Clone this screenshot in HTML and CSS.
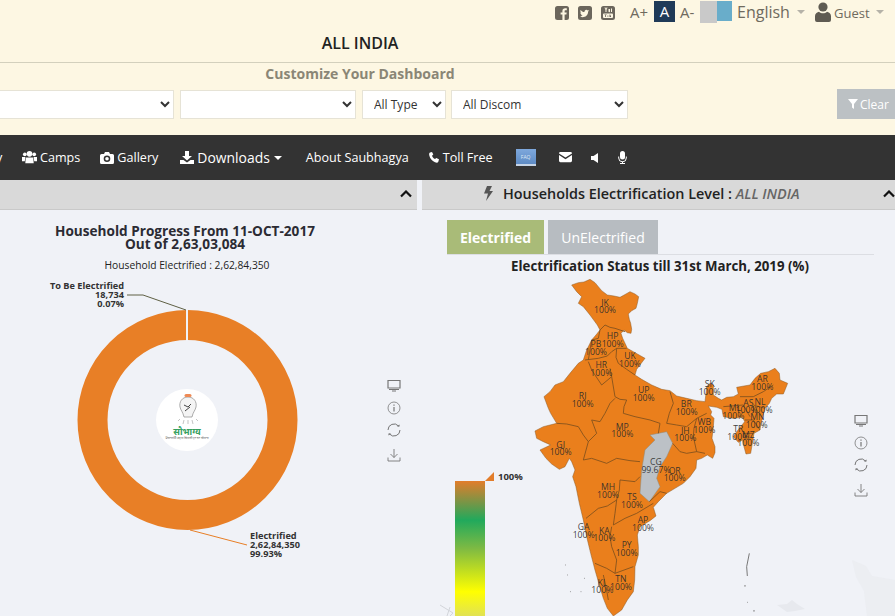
FILE: index.html
```html
<!DOCTYPE html>
<html lang="en">
<head>
<meta charset="utf-8">
<title>Saubhagya Dashboard</title>
<link rel="stylesheet" href="styles.css">
</head>
<body>
<header class="top">
  <div class="utility">
    <svg class="social" viewBox="0 0 14 14"><path fill-rule="evenodd" d="M2.5 0h9A2.5 2.5 0 0 1 14 2.5v9a2.5 2.5 0 0 1-2.5 2.5H9.6V8.6h1.8l.3-2.1H9.6V5.200c0-.6.2-1 1-1h1.200V2.300C11.500 2.300 10.900 2.200 10.200 2.200 8.600 2.200 7.400 3.200 7.400 5v1.500H5.600v2.100h1.800V14H2.500A2.500 2.500 0 0 1 0 11.500v-9A2.500 2.500 0 0 1 2.500 0z"/></svg>
    <svg class="social" viewBox="0 0 14 14"><path fill-rule="evenodd" d="M2.500 0h9A2.500 2.500 0 0 1 14 2.500v9a2.500 2.500 0 0 1-2.500 2.500h-9A2.500 2.500 0 0 1 0 11.500v-9A2.500 2.500 0 0 1 2.500 0zM11.300 4.600c-.4.2-.7.2-1.100.3.400-.2.700-.6.800-1-.4.200-.8.400-1.200.5a1.900 1.900 0 0 0-3.300 1.700C4.900 6 3.500 5.200 2.600 4c-.5.900-.2 2 .6 2.600-.3 0-.6-.1-.9-.2 0 .9.700 1.700 1.500 1.900-.3.100-.6.100-.8 0 .2.800 1 1.300 1.800 1.300-.8.600-1.800.9-2.800.8 2.600 1.700 8.100.7 8.100-4.900.4-.3.900-.6 1.200-.9z"/></svg>
    <svg class="social" viewBox="0 0 14 14"><path fill-rule="evenodd" d="M2.500 0h9A2.500 2.500 0 0 1 14 2.500v9a2.500 2.500 0 0 1-2.500 2.500h-9A2.500 2.500 0 0 1 0 11.500v-9A2.500 2.500 0 0 1 2.500 0zM3 7.500a1 1 0 0 0-1 1V11a1 1 0 0 0 1 1h8a1 1 0 0 0 1-1V8.500a1 1 0 0 0-1-1zM3.500 1.500l1 2.500v2h1V4l1-2.500h-1L5 3 4.500 1.500zM7.500 3v2.500a.7.7 0 0 0 1.500 0V3h-.7zM10 2.500V6h1V2.500zM3.500 8.500h2.200v.6h-.7V11h-.8V9.100h-.7zM6.500 9.500v1.300h.8V9.500zM8.500 8.500V11h1.500V9.500H9.300v-1z"/></svg>
    <span class="font-step step-plus">A+</span>
    <span class="font-step step-active">A</span>
    <span class="font-step step-minus">A-</span>
    <span class="swatch swatch-grey"></span><span class="swatch swatch-blue"></span>
    <span class="lang">English</span><span class="caret caret-grey lang-caret"></span>
    <svg class="user" viewBox="0 0 16 20"><circle cx="8" cy="5" r="4.600"/><path d="M0 18v-4c0-2.500 2.500-4 4-4.300 1.100 1 2.600 1.500 4 1.500s2.900-.5 4-1.500c1.500.3 4 1.800 4 4.300v4a2 2 0 0 1-2 2H2a2 2 0 0 1-2-2z"/></svg>
    <span class="guest">Guest</span><span class="caret caret-grey guest-caret"></span>
  </div>
  <h1 class="place">ALL INDIA</h1>
  <h2 class="customize">Customize Your Dashboard</h2>
  <div class="filters">
    <select class="filter f-state"><option></option></select>
    <select class="filter f-district"><option></option></select>
    <select class="filter f-type"><option>All Type</option></select>
    <select class="filter f-discom"><option>All Discom</option></select>
    <button class="clear" type="button"><svg class="funnel" viewBox="0 0 10 10"><path d="M0 0h10L6 5v5L4 8.500V5z"/></svg>Clear</button>
  </div>
</header>

<nav class="nav">
  <span class="nav-item cut">y</span>
  <span class="nav-item camps"><svg class="nav-icon w15" viewBox="0 0 16 13"><circle cx="3" cy="3.500" r="2"/><circle cx="13" cy="3.500" r="2"/><circle cx="8" cy="3" r="3"/><path d="M0 6.500h3.500L3 11H0zM16 6.500h-3.500L13 11h3zM4 7h8l.5 6h-9z"/></svg>Camps</span>
  <span class="nav-item gallery"><svg class="nav-icon w14" viewBox="0 0 14 12"><path fill-rule="evenodd" d="M1.500 2H4l1-2h4l1 2h2.500A1.500 1.500 0 0 1 14 3.500v7a1.500 1.500 0 0 1-1.500 1.500h-11A1.500 1.500 0 0 1 0 10.500v-7A1.500 1.500 0 0 1 1.500 2zM7 3.500a3.300 3.300 0 1 0 0 6.600 3.300 3.300 0 0 0 0-6.600zM7 5a1.800 1.800 0 1 1 0 3.600A1.800 1.800 0 0 1 7 5z"/></svg>Gallery</span>
  <span class="nav-item downloads"><svg class="nav-icon w14" viewBox="0 0 14 13"><path d="M5 0h4v5h3L7 9.500 2 5h3zM0 9h3.500L7 11.500 10.500 9H14v4H0z"/></svg>Downloads<span class="caret caret-white"></span></span>
  <span class="nav-item about">About Saubhagya</span>
  <span class="nav-item toll"><svg class="nav-icon w10" viewBox="0 0 10 11"><path d="M1 .5 3 0l1.300 2.500L3 3.800c.5 1.500 1.500 2.600 3 3.300l1.300-1.200L10 7.300 9.300 9.800C8.800 11 7.500 11 6 10.300 3 9 1 6.500.3 3.500 0 2 0 1 1 .5z"/></svg>Toll Free</span>
  <span class="faq"><span class="faq-text">FAQ</span></span>
  <svg class="nav-icon mail" viewBox="0 0 14 11"><path d="M0 1.500A1.500 1.500 0 0 1 1.500 0h11A1.500 1.500 0 0 1 14 1.500L7 6zM0 3.300 7 7.800l7-4.500v6.200a1.500 1.500 0 0 1-1.500 1.500h-11A1.500 1.500 0 0 1 0 9.500z"/></svg>
  <svg class="nav-icon speaker" viewBox="0 0 7 10"><path d="M0 3h2.500L7 0v10L2.500 7H0z"/></svg>
  <svg class="nav-icon mic" viewBox="0 0 9 13"><rect x="2" y="0" width="5" height="8.500" rx="2.500"/><path d="M.7 5.500v1.500a3.800 3.800 0 0 0 7.600 0V5.500" fill="none" stroke="#fff"/><path d="M4 10.500h1V12h2v1H2v-1h2z"/></svg>
</nav>

<main class="panels">
  <section class="panel">
    <div class="panel-head head-left">
      <span class="head-title cut-title">Household Electrified</span>
      <svg class="chev" viewBox="0 0 12 8"><path d="M1 6.500 6 1.500l5 5" fill="none" stroke="#111" stroke-width="2.200"/></svg>
    </div>
    <div class="chart">
      <svg class="chart-svg" width="417" height="406" viewBox="0 0 417 406">
        <text class="c-title" x="185" y="26">Household Progress From 11-OCT-2017</text>
        <text class="c-title" x="185" y="39">Out of 2,63,03,084</text>
        <text class="c-sub" x="187" y="59">Household Electrified : 2,62,84,350</text>
        <circle cx="187.500" cy="210" r="95" fill="none" stroke="#e87f26" stroke-width="30"/>
        <rect x="186" y="99" width="2" height="32" fill="#f0f2f7"/>
        <path d="M127 85h16l43 15" fill="none" stroke="#5f6044"/>
        <path d="M190 320l57 15" fill="none" stroke="#e87f26"/>
        <g class="c-label end">
          <text x="124" y="79">To Be Electrified</text>
          <text x="124" y="88">18,734</text>
          <text x="124" y="97">0.07%</text>
        </g>
        <g class="c-label">
          <text x="250" y="329">Electrified</text>
          <text x="250" y="338">2,62,84,350</text>
          <text x="250" y="347">99.93%</text>
        </g>
        <circle cx="187" cy="210" r="31" fill="#fff"/>
        <path d="M188 187c-6 0-9 5-8 10 .5 3 3 5 4 10h8c1-5 3.500-7 4-10 1-5-2-10-8-10z" fill="#f4f4f4" stroke="#8a8a8a" stroke-width=".7"/>
        <rect x="184.500" y="184" width="7" height="3" rx="1.500" fill="#ee8a55"/>
        <path d="M184 195l4 2 3-3M185 201l5-4" fill="none" stroke="#444" stroke-width="1"/>
        <path d="M180 209l-2 2M184 210l-1 4M188 210v4M192 210l1 4M196 209l2 2" stroke="#aaa" stroke-width=".7" fill="none"/>
        <text class="logo-hi" x="187" y="225">सौभाग्य</text>
        <text class="logo-sub" x="187" y="229">प्रधानमंत्री सहज बिजली हर घर योजना</text>
      </svg>
      <div class="tools tools-left">
        <svg class="tool" viewBox="0 0 14 14"><path d="M1 1.500h12v7.500H1zM2 10.500h10" fill="none" stroke="#777" stroke-width="1.200"/><path d="M5 11.500h4v1H5z" fill="#777"/></svg>
        <svg class="tool" viewBox="0 0 14 14"><circle cx="7" cy="7" r="6" fill="none" stroke="#777" stroke-width=".8"/><path d="M7 3.500v1.300M7 6v4.500" stroke="#777" stroke-width="1.200"/></svg>
        <svg class="tool" viewBox="0 0 14 14"><path d="M1 7a6 6 0 0 1 10.500-4M13 7A6 6 0 0 1 2.500 11" fill="none" stroke="#666" stroke-width=".9"/><path d="M10 3.500h2.500V1.500zM4 10.500H1.500v2z" fill="#666"/></svg>
        <svg class="tool tool-last" viewBox="0 0 14 14"><path d="M7 1v8.500M3.500 6 7 9.500 10.500 6M1 9.500v3.500h12V9.500" fill="none" stroke="#777" stroke-width=".9"/></svg>
      </div>
    </div>
  </section>

  <section class="panel">
    <div class="panel-head head-right">
      <svg class="bolt" viewBox="0 0 9 15"><path d="M3 0h5L5.500 5H9L2 15l2-7.500H0z"/></svg>
      <span class="head-title">Households Electrification Level : <em>ALL INDIA</em></span>
      <svg class="chev chev-right" viewBox="0 0 12 8"><path d="M1 6.500 6 1.500l5 5" fill="none" stroke="#111" stroke-width="2.200"/></svg>
    </div>
    <div class="tabs">
      <span class="tab tab-on">Electrified</span>
      <span class="tab tab-off">UnElectrified</span>
    </div>
    <div class="map-wrap">
      <svg class="map" width="473" height="361" viewBox="0 0 473 361">
        <defs>
          <linearGradient id="legend" x1="0" y1="0" x2="0" y2="1">
            <stop offset="0" stop-color="#e27d2b"/>
            <stop offset=".29" stop-color="#21a95c"/>
            <stop offset=".5" stop-color="#7eba43"/>
            <stop offset=".82" stop-color="#ffff00"/>
            <stop offset="1" stop-color="#e1e254"/>
          </linearGradient>
          <filter id="soft" x="-2%" y="-2%" width="104%" height="104%"><feGaussianBlur stdDeviation="1"/></filter>
        </defs>
        <text class="m-title" x="238" y="16">Electrification Status till 31st March, 2019 (%)</text>
        <g class="water">
          <path d="M355 350l10-1 5-4 5 4 8 5-10 2-8 1z"/>
          <path d="M430 305l14 6 6 10 23 4v36h-28l-3-25-8-14z" opacity=".5"/>
          <path d="M18 350l13 8-3 3M28 352l-3 9" fill="none" stroke="#d3d5da"/>
        </g>
        <rect x="33" y="226" width="30" height="135" fill="url(#legend)"/>
        <path d="M63 226l9-9v9z" fill="#e27d2b"/>
        <text class="legend-text" x="76" y="225">100%</text>
        <g transform="translate(98 15) scale(.33333)">
          <g filter="url(#soft)">
          <path class="state" d="M155 45 175 38 192 36 210 28 225 38 235 50 245 62 262 75 282 78 300 82 318 72 330 65 345 72 356 80 352 100 348 115 335 122 325 132 328 148 332 160 335 178 333 190 322 188 312 180 303 190 308 205 316 222 322 235 345 248 375 265 362 282 350 298 345 315 365 328 395 345 425 358 450 362 470 378 500 385 530 392 555 395 558 370 560 350 570 340 580 345 580 375 595 385 605 390 620 382 640 380 655 372 650 352 672 348 690 345 705 325 722 310 745 305 765 295 778 310 780 330 803 340 795 360 790 372 770 372 755 385 748 400 735 415 728 440 722 465 720 480 702 490 697 520 692 550 678 552 672 530 668 510 655 517 640 500 648 488 662 470 674 455 668 442 640 445 610 440 606 418 590 412 565 408 575 425 572 435 582 445 580 470 576 505 585 530 585 548 578 565 562 555 545 565 530 570 528 595 510 620 490 640 465 655 440 670 415 695 400 712 408 738 390 752 360 770 352 795 355 830 355 855 345 890 344 930 340 965 322 990 305 1020 280 1038 262 1015 250 985 238 945 225 900 212 850 200 800 190 750 178 700 168 650 158 620 165 600 155 575 148 565 135 590 118 598 95 582 78 565 60 540 92 525 70 515 50 505 45 483 70 470 110 460 92 430 85 415 72 380 90 365 105 345 130 335 150 310 175 280 190 270 200 240 215 210 228 195 240 180 232 165 210 135 190 110 175 100 185 80 170 65Z"/>
          <path class="cg" d="M390 495 440 485 458 520 440 560 420 590 410 625 420 650 388 695 360 670 365 600 375 540 405 510Z"/>
          <path class="border" d="M240 180 255 165 270 172 285 175 315 185M240 180 235 205 215 210 205 270M195 270 235 265 262 258 275 245 290 235 320 235M290 235 288 262 295 280 320 298 345 315M205 275 215 300 245 345 275 320 270 295M275 320 285 380 300 388 320 390 312 410 310 430M110 460 140 462 175 470 190 495 205 515 230 490 215 450 240 455 255 430 270 400 285 385M310 430 345 440 390 450 420 460 415 490M450 365 460 400 448 430 440 460M440 460 470 465 500 470 530 445 560 430M530 445 522 475 520 500 530 545 555 550M458 520 480 545 500 550 530 545M205 515 190 570 215 565 260 580 290 565 330 572 360 575M300 630 345 635 360 620M300 630 298 660 290 690 285 730 280 765M198 745 235 715 262 708 290 690M280 765 315 745 350 730 375 715 400 700M275 770 270 800 275 830 290 870 285 910M225 880 260 895 285 910 340 890M250 915 258 950 265 990M388 695 420 665 440 670M660 380 700 380 730 365 760 345M610 410 670 405 690 440M700 405 735 415M675 450 700 450 720 480M670 490 700 490"/>
          </g>
          <path class="isles" d="M688 850 680 890 682 918M135 885h2M142 915h2M192 925h2M150 965h2M182 965h2M675 945v5M682 997h2M702 1020v5"/>
          <g class="m-labels">
            <text x="255" y="107">JK</text><text x="255" y="130">100%</text>
            <text x="278" y="207">HP</text><text x="278" y="230">100%</text>
            <text x="228" y="231">PB</text><text x="228" y="255">100%</text>
            <text x="330" y="266">UK</text><text x="330" y="290">100%</text>
            <text x="244" y="293">HR</text><text x="244" y="317">100%</text>
            <text x="371" y="369">UP</text><text x="371" y="393">100%</text>
            <text x="188" y="386">RJ</text><text x="188" y="410">100%</text>
            <text x="569" y="352">SK</text><text x="569" y="376">100%</text>
            <text x="727" y="337">AR</text><text x="727" y="360">100%</text>
            <text x="499" y="412">BR</text><text x="500" y="435">100%</text>
            <text x="685" y="407">AS</text><text x="680" y="429">100%</text>
            <text x="720" y="405">NL</text><text x="725" y="428">100%</text>
            <text x="645" y="423">ML</text><text x="640" y="446">100%</text>
            <text x="712" y="451">MN</text><text x="710" y="474">100%</text>
            <text x="553" y="464">WB</text><text x="553" y="488">100%</text>
            <text x="496" y="491">JH</text><text x="496" y="513">100%</text>
            <text x="307" y="479">MP</text><text x="307" y="502">100%</text>
            <text x="655" y="487">TR</text><text x="655" y="510">100%</text>
            <text x="685" y="505">MZ</text><text x="685" y="528">100%</text>
            <text x="122" y="533">GJ</text><text x="122" y="556">100%</text>
            <text x="408" y="585">CG</text><text x="408" y="608">99.67%</text>
            <text x="464" y="611">OR</text><text x="464" y="634">100%</text>
            <text x="264" y="659">MH</text><text x="264" y="683">100%</text>
            <text x="336" y="691">TS</text><text x="336" y="714">100%</text>
            <text x="369" y="760">AP</text><text x="369" y="783">100%</text>
            <text x="191" y="780">GA</text><text x="191" y="803">100%</text>
            <text x="253" y="791">KA</text><text x="253" y="814">100%</text>
            <text x="320" y="834">PY</text><text x="320" y="858">100%</text>
            <text x="303" y="937">TN</text><text x="303" y="960">100%</text>
            <text x="247" y="947">KL</text><text x="247" y="970">100%</text>
          </g>
        </g>
      </svg>
      <div class="tools tools-right">
        <svg class="tool" viewBox="0 0 14 14"><path d="M1 1.500h12v7.500H1zM2 10.500h10" fill="none" stroke="#777" stroke-width="1.200"/><path d="M5 11.500h4v1H5z" fill="#777"/></svg>
        <svg class="tool" viewBox="0 0 14 14"><circle cx="7" cy="7" r="6" fill="none" stroke="#777" stroke-width=".8"/><path d="M7 3.500v1.300M7 6v4.500" stroke="#777" stroke-width="1.200"/></svg>
        <svg class="tool" viewBox="0 0 14 14"><path d="M1 7a6 6 0 0 1 10.500-4M13 7A6 6 0 0 1 2.500 11" fill="none" stroke="#666" stroke-width=".9"/><path d="M10 3.500h2.500V1.500zM4 10.500H1.500v2z" fill="#666"/></svg>
        <svg class="tool tool-last" viewBox="0 0 14 14"><path d="M7 1v8.500M3.500 6 7 9.500 10.500 6M1 9.500v3.500h12V9.500" fill="none" stroke="#777" stroke-width=".9"/></svg>
      </div>
    </div>
  </section>
</main>
</body>
</html>
```
FILE: styles.css
```css
* { box-sizing: border-box; }
html, body { margin: 0; height: 616px; overflow: hidden; }
body {
  width: 895px;
  background: #f0f2f7;
  font-family: "Open Sans", "Noto Sans", sans-serif;
  color: #222;
}

/* Header */
.top { height: 135px; background: #fdf7e3; overflow: hidden; }
.utility { display: flex; align-items: center; height: 24px; padding-left: 555px; color: #6f6a5e; }
.social { width: 14px; height: 14px; fill: #6b665c; margin-right: 9px; margin-top: 1px; flex: none; }
.social:nth-child(3) { margin-right: 0; }
.font-step { font-size: 15px; line-height: 21px; }
.step-plus { margin-left: 15px; width: 24px; }
.step-active { width: 21px; height: 21px; background: #1f3a58; color: #fff; text-align: center; align-self: flex-start; margin-top: 1px; }
.step-minus { margin-left: 5px; width: 20px; }
.swatch { height: 22px; align-self: flex-start; margin-top: 1px; }
.swatch-grey { width: 17px; background: #c9c9c9; }
.swatch-blue { width: 15px; height: 20px; background: #69adca; }
.lang { font-size: 16px; margin-left: 5px; line-height: 24px; width: 53px; }
.caret { display: inline-block; width: 0; height: 0; border-left: 4px solid transparent; border-right: 4px solid transparent; border-top: 4px solid #fff; }
.caret-grey { border-top-color: #b5b2a8; }
.lang-caret { margin-left: 7px; }
.user { width: 16px; height: 20px; fill: #5f5b52; margin-left: 10px; }
.guest { font-size: 13px; margin-left: 3px; margin-top: 2px; }
.guest-caret { margin-left: 6px; }

.place { margin: 9px 0 0; width: 720px; height: 29px; text-align: center; font-size: 16px; line-height: 20px; font-weight: 600; color: #222; }
.customize {
  margin: 0; width: 895px; height: 27px; padding: 1px 175px 0 0;
  text-align: center; font-size: 14px; line-height: 20px; font-weight: 700; color: #8a8676;
  border-top: 1px solid #d3d0bd;
}
.filters { display: flex; align-items: center; height: 30px; margin-left: -60px; }
.filter {
  flex: none; height: 29px; font-family: inherit; font-size: 12px; color: #333;
  background: #fff; border: 1px solid #e6e3d6; border-radius: 0; padding: 0 7px;
}
.f-state { width: 234px; margin-right: 6px; }
.f-district { width: 176px; margin-right: 6px; }
.f-type { width: 84px; margin-right: 5px; }
.f-discom { width: 177px; margin-right: 209px; }
.clear {
  flex: none; width: 70px; height: 30px; padding: 0 0 0 11px; border: 0; background: #bcc1c4; color: #fff;
  font-family: inherit; font-size: 12px; text-align: left; display: flex; align-items: center;
}
.funnel { width: 10px; height: 10px; fill: #fff; margin-right: 2px; }

/* Navigation */
.nav { display: flex; align-items: center; height: 45px; background: #333; color: #fff; font-size: 12.600px; white-space: nowrap; overflow: hidden; }
.nav-item { display: inline-flex; align-items: center; }
.nav-icon { fill: #fff; flex: none; height: auto; }
.w15 { width: 15px; margin-right: 3px; }
.w14 { width: 14px; margin-right: 3px; }
.w10 { width: 10px; margin-right: 4px; }
.cut { width: 22px; margin-left: -4px; margin-right: 4px; }
.gallery { margin-left: 20px; }
.downloads { margin-left: 22px; font-size: 13.900px; }
.caret-white { margin-left: 4px; }
.about { margin-left: 24px; }
.toll { margin-left: 20px; }
.faq { width: 20px; height: 17px; margin-left: 23px; background: linear-gradient(#7ea8dc, #5e8bc4); border-bottom: 2px solid #c6d4e6; display: flex; align-items: center; justify-content: center; }
.faq-text { font-size: 5px; color: #dfe8f5; }
.mail { width: 13px; margin-left: 23px; }
.speaker { width: 7px; margin-left: 19px; }
.mic { width: 9px; margin-left: 20px; }

/* Panels */
.panels { display: grid; grid-template-columns: 417px 473px; column-gap: 5px; }
.panel { position: relative; }
.panel-head {
  display: flex; align-items: center; height: 30px; padding-bottom: 2px; background: #d9d9d9;
  border-bottom: 1px solid #c9c9c9; font-size: 14.400px; font-weight: 600; color: #222; white-space: nowrap; overflow: hidden;
}
.head-left { justify-content: space-between; padding-right: 5px; }
.cut-title { margin-left: -157px; }
.head-right { padding-left: 62px; }
.head-title em { font-weight: 600; color: #666; }
.bolt { width: 9px; height: 15px; fill: #555; margin-right: 10px; flex: none; }
.chev { width: 12px; height: 8px; flex: none; }
.chev-right { margin-left: auto; }

.chart { position: relative; height: 406px; }
.chart-svg, .map { display: block; }
.c-title { font: 700 13.600px "Open Sans", sans-serif; fill: #2b2b33; text-anchor: middle; }
.c-sub { font: 400 10.250px "Open Sans", sans-serif; fill: #222; text-anchor: middle; }
.c-label text { font: 700 9.200px "Open Sans", sans-serif; fill: #333; }
.c-label.end text { text-anchor: end; }
.logo-hi { font: 700 9px "Noto Sans", "DejaVu Sans", sans-serif; fill: #35a060; text-anchor: middle; }
.logo-sub { font: 400 3.200px "Noto Sans", "DejaVu Sans", sans-serif; fill: #555; text-anchor: middle; }

.tools { position: absolute; display: flex; flex-direction: column; gap: 8px; width: 14px; }
.tool { width: 14px; height: 14px; display: block; }
.tool-last { margin-top: 3px; }
.tools-left { left: 387px; top: 169px; }
.tools-right { left: 432px; top: 159px; }

.tabs { display: flex; gap: 4px; height: 45px; margin-left: 25px; margin-right: 21px; padding-top: 10px; border-bottom: 1px solid #dcdee3; }
.tab { height: 34px; padding-top: 1px; font-size: 14px; line-height: 34px; text-align: center; color: #fff; }
.tab-on { width: 97px; background: #a9bb78; font-weight: 700; }
.tab-off { width: 110px; background: #b7bcc1; }
.map-wrap { position: relative; height: 361px; }
.m-title { font: 700 13.250px "Open Sans", sans-serif; fill: #222; text-anchor: middle; }
.legend-text { font: 700 9.500px "Open Sans", sans-serif; fill: #333; }
.water { fill: #e7e9ee; }
.state { fill: #ea7f1c; stroke: #8c5a22; stroke-width: 1.500; stroke-linejoin: round; }
.cg { fill: #bcc1c6; stroke: #8c8c80; stroke-width: 1.500; }
.border { fill: none; stroke: #7d4f1c; stroke-width: 2.500; stroke-linejoin: round; }
.isles { fill: none; stroke: #777; stroke-width: 3; }
.m-labels text { font: 400 26px "Open Sans", sans-serif; fill: #2b2b2b; fill-opacity: .9; text-anchor: middle; }
```
